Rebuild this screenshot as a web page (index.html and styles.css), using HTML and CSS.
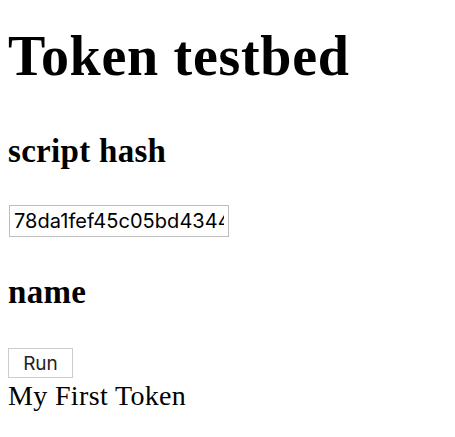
FILE: index.html
```html
<!DOCTYPE html>
<html lang="en">
<head>
<meta charset="utf-8">
<title>Token testbed</title>
<link rel="stylesheet" href="styles.css">
</head>
<body>
<h1 class="title">Token testbed</h1>
<h3 class="label label-hash">script hash</h3>
<input class="hash" type="text" value="78da1fef45c05bd43441e7b0c3c5f6d8a9e2b1c047f3a6d5e">
<h3 class="label label-name">name</h3>
<button class="run" type="button">Run</button>
<div class="result">My First Token</div>
</body>
</html>
```
FILE: styles.css
```css
html, body {
  background: #ffffff;
}
body {
  margin: 0 8px;
  color: #000000;
  font-family: "Liberation Serif", "Times New Roman", serif;
  font-size: 28px;
}
.title {
  margin: 24px 0 0;
  font-size: 56px;
  line-height: 64px;
  font-weight: bold;
  letter-spacing: 0.7px;
}
.label {
  margin: 0;
  font-size: 33px;
  line-height: 38px;
  font-weight: bold;
  letter-spacing: 0.3px;
}
.label-hash {
  margin-top: 43.5px;
}
.label-name {
  margin-top: 36px;
}
.hash {
  display: block;
  box-sizing: border-box;
  margin: 35.5px 0 0 1px;
  width: 220px;
  height: 32px;
  padding: 0 4px;
  border: 1.5px solid #bdbdbd;
  border-radius: 0;
  background: #ffffff;
  color: #000000;
  font-family: Inter, "Liberation Sans", sans-serif;
  font-size: 20px;
  letter-spacing: 0.05px;
  outline: none;
}
.run {
  display: block;
  box-sizing: border-box;
  margin: 37px 0 0;
  width: 65px;
  height: 30px;
  padding: 0;
  border: 1.5px solid #cccccc;
  border-radius: 0;
  background: #ffffff;
  color: #222222;
  font-family: Inter, "Liberation Sans", sans-serif;
  font-size: 19px;
}
.result {
  margin-top: 1.5px;
  line-height: 32px;
  letter-spacing: 0.35px;
}
```
